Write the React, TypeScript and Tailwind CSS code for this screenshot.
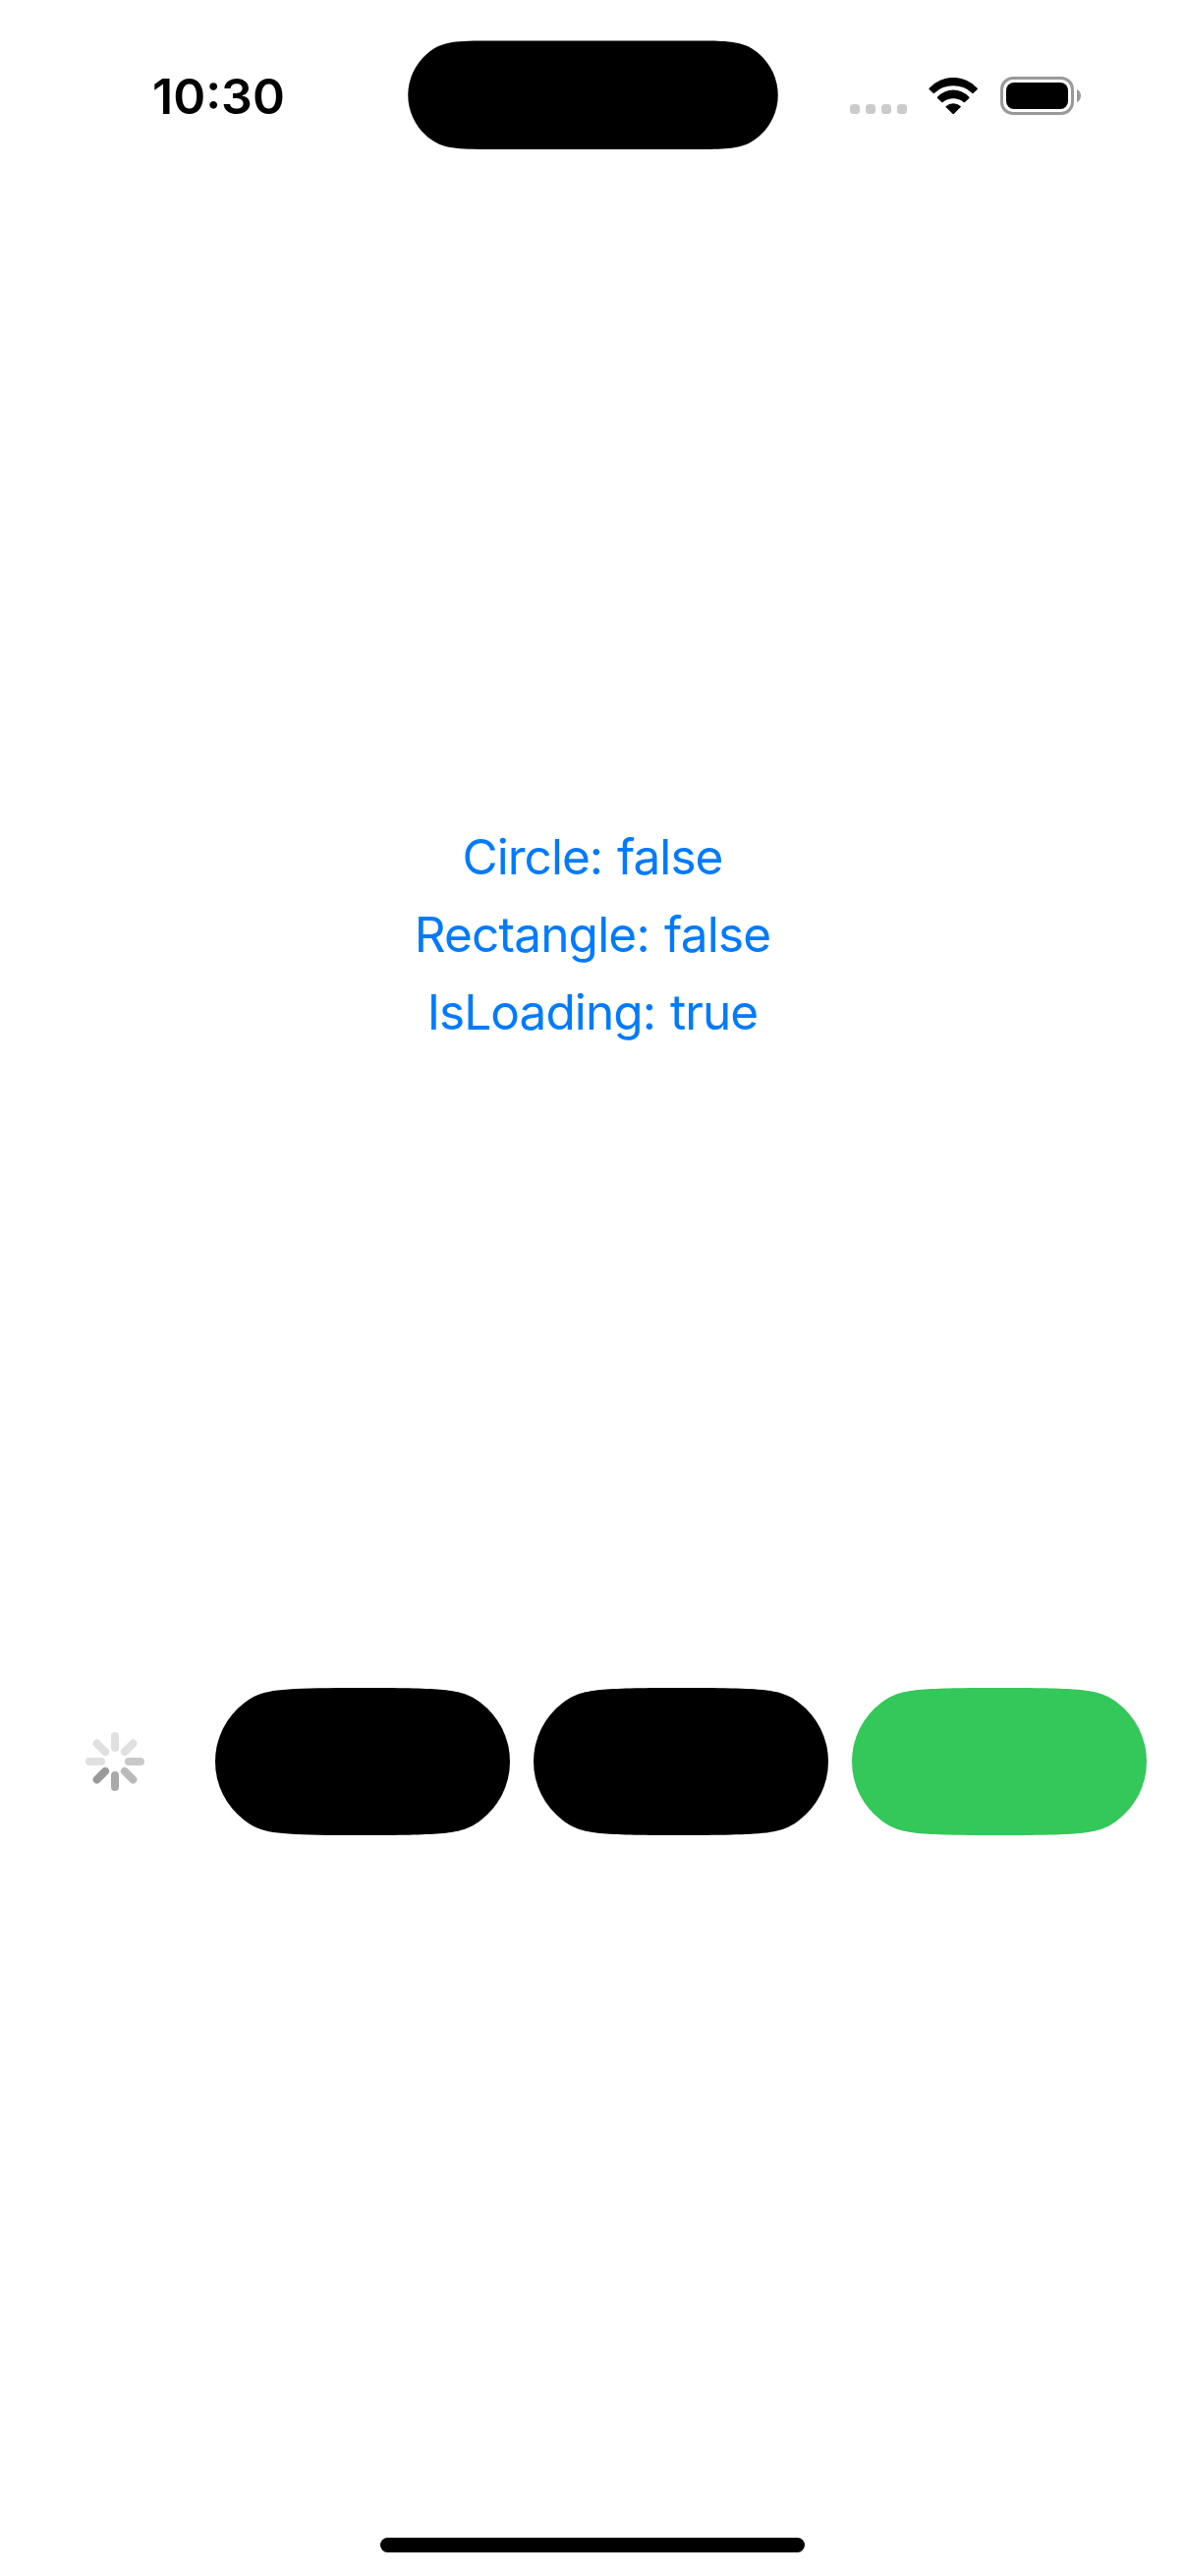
const BLUE_LINES = [
  { text: "Circle: false", tracking: "tracking-[-0.98px]" },
  { text: "Rectangle: false", tracking: "tracking-[-0.8px]" },
  { text: "IsLoading: true", tracking: "tracking-[-0.92px]" },
];

const SPOKES = [
  { angle: 0, color: "#e0e0e0" },
  { angle: 45, color: "#e0e0e0" },
  { angle: 90, color: "#c9c9cb" },
  { angle: 135, color: "#bababc" },
  { angle: 180, color: "#aaaaac" },
  { angle: 225, color: "#9a9a9c" },
  { angle: 270, color: "#e0e0e0" },
  { angle: 315, color: "#e0e0e0" },
];

function WifiIcon() {
  return (
    <svg className="h-[37.67px] w-[50.33px]" viewBox="286 56 151 113">
      <path d="M288 88 A99.5 99.5 0 0 1 435 88 Q437 90 435 92 L423 103 Q421 105 419 103 A84.6 84.6 0 0 0 304 103 Q302 105 300 103 L288 92 Q286 90 288 88Z" />
      <path d="M313 115 A66 66 0 0 1 410 115 Q412 117 410 119 L397 131 Q395 132.500 393 131 A51 51 0 0 0 330 131 Q328 132.500 326 131 L313 119 Q311 117 313 115Z" />
      <path d="M339.500 143 A33 33 0 0 1 383.500 143 Q385.500 145 383.500 147 L363 167 Q361.500 168.500 360 167 L339.500 147 Q337.500 145 339.500 143Z" />
    </svg>
  );
}

function Spinner() {
  return (
    <svg className="h-[60px] w-[60px]" viewBox="-30 -30 60 60">
      {SPOKES.map((s) => (
        <rect key={s.angle} x="-4" y="-30" width="8" height="20" rx="4" fill={s.color} transform={`rotate(${s.angle})`} />
      ))}
    </svg>
  );
}

/* Capsule whose round ends ease gradually into the flat edges, 300 x 150 */
function Capsule({ className }: { className: string }) {
  return (
    <svg className={`h-[150px] w-[300px] ${className}`} viewBox="0 0 300 150" fill="currentColor">
      <path d="M125 0 H175 C240 0.800 253 2.300 270 15 A75 75 0 0 1 270 135 C253 147.700 240 149.200 175 150 H125 C60 149.200 47 147.700 30 135 A75 75 0 0 1 30 15 C47 2.300 60 0.800 125 0Z" />
    </svg>
  );
}

function Island() {
  return (
    <svg className="h-[112px] w-[377px]" viewBox="0 0 377 112">
      <path d="M78 0.600 H299 C331 0.600 344 2 358 14.300 A55.300 55.300 0 0 1 358 97.300 C344 109.600 331 111 299 111 H78 C46 111 33 109.600 19 97.300 A55.300 55.300 0 0 1 19 14.300 C33 2 46 0.600 78 0.600Z" />
    </svg>
  );
}

function StatusBar() {
  return (
    <header className="flex h-[177px] w-full items-start">
      <div className="w-[415px] pt-[68px] pl-[155px]">
        <div className="text-[50px] leading-[60px] font-semibold">10:30</div>
      </div>
      <div className="pt-[41px]">
        <Island />
      </div>
      <div className="mt-[78px] flex h-[39px] items-start pl-[73px]">
        <div className="mt-[28px] flex gap-[6px]">
          {[0, 1, 2, 3].map((i) => (
            <div key={i} className="size-[10px] rounded-[3.5px] bg-[#cbcbcb]" />
          ))}
        </div>
        <div className="mt-[0.67px] ml-[22.33px]">
          <WifiIcon />
        </div>
        <div className="ml-[22.33px] h-[39px] w-[75px] rounded-[13px] border-[3px] border-[#999999] p-[3px]">
          <div className="h-full w-full rounded-[8px] bg-black" />
        </div>
        <svg className="mt-[13px] ml-[3px] h-[13px] w-[4px]" viewBox="0 0 4 13">
          <path d="M0 0 C2.500 1.200 4 3.500 4 6.500 C4 9.500 2.500 11.800 0 13Z" fill="#999999" />
        </svg>
      </div>
    </header>
  );
}

export default function App() {
  return (
    <div className="flex h-[2622px] w-[1206px] flex-col bg-white font-['Inter',sans-serif] text-black">
      <StatusBar />
      <main className="flex flex-1 flex-col">
        <div className="flex flex-col items-center pt-[656px] text-[#007aff]">
          {BLUE_LINES.map((l) => (
            <button
              key={l.text}
              className={`text-[49.5px] leading-[79px] [word-spacing:2px] whitespace-pre ${l.tracking}`}
            >
              {l.text}
            </button>
          ))}
        </div>
        <div className="mt-[648px] flex items-center gap-6 px-[39px]">
          <div className="flex w-[156px] justify-center">
            <Spinner />
          </div>
          <Capsule className="text-black" />
          <Capsule className="text-black" />
          <Capsule className="text-[#34c759]" />
        </div>
      </main>
      <footer className="flex justify-center pb-6">
        <div className="h-[15px] w-[432px] rounded-full bg-black" />
      </footer>
    </div>
  );
}
